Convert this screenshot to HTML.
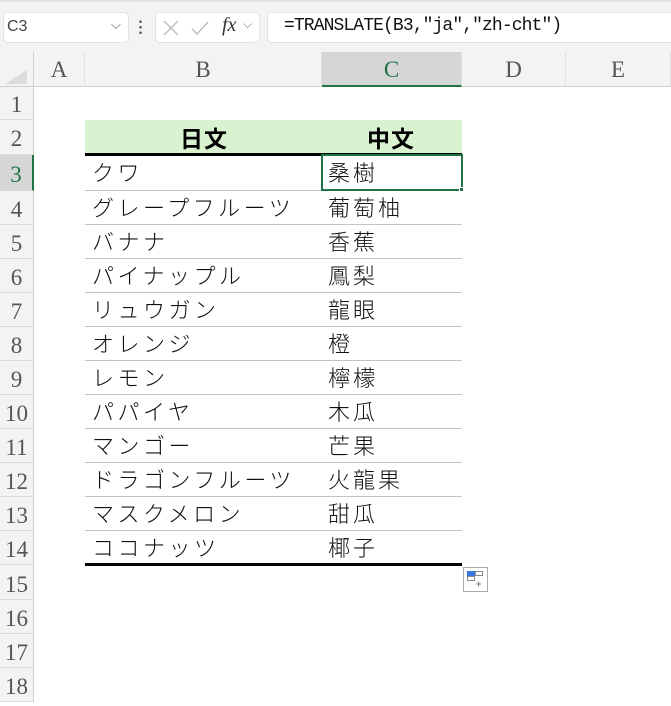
<!DOCTYPE html>
<html><head><meta charset="utf-8"><style>
*{margin:0;padding:0;box-sizing:border-box}
body{width:671px;height:695px;overflow:hidden;background:#fff;position:relative;font-family:"Liberation Sans","Noto Sans CJK JP",sans-serif}
.a{position:absolute}
.top{left:0;top:0;width:671px;height:52px;background:#f3f3f3;border-top:2px solid #e0e0e0}
.box{background:#fff;border:1px solid #e4e4e4;border-radius:5px}
.ch{top:52px;height:35px;background:#f3f3f3;border-bottom:1px solid #d0d0d0;border-right:1px solid #e0e0e0;font-family:"Liberation Serif",serif;font-size:23px;color:#555;text-align:center;line-height:36px}
.rh{left:0;width:34px;background:#f3f3f3;border-bottom:1px solid #dcdcdc;border-right:1px solid #d0d0d0;font-family:"Liberation Serif",serif;font-size:23px;color:#555;text-align:center}
.jp{font-family:"Liberation Sans","Noto Sans CJK JP",sans-serif;font-weight:300;font-size:22px;color:#111;letter-spacing:3.5px;white-space:nowrap}
.zh{letter-spacing:3px}
.row{left:85px;width:377px;height:34px;border-bottom:1px solid #c4c4c4}
</style></head><body>
<div class="a top"></div>
<div class="a box" style="left:3px;top:12px;width:126px;height:31px"></div>
<div class="a" style="left:7px;top:18px;font-size:16px;color:#444;font-weight:300">C3</div>
<div class="a" style="left:111px;top:17px;font-size:13px;color:#555">⌵</div>
<div class="a" style="left:139px;top:19px;width:3px;height:16px;background:radial-gradient(circle,#555 1.2px,transparent 1.4px) 0 0/3px 5.5px"></div>
<div class="a box" style="left:155px;top:12px;width:105px;height:31px"></div>
<svg class="a" style="left:162px;top:19px" width="60" height="18"><path d="M2 2L16 16M16 2L2 16" stroke="#bbb" stroke-width="1.3"/><path d="M30 10L35 15L46 3" stroke="#bbb" stroke-width="1.3" fill="none"/></svg>
<div class="a" style="left:222px;top:14px;font-family:'Liberation Serif',serif;font-style:italic;font-size:20px;color:#333">fx</div>
<div class="a" style="left:243px;top:17px;font-size:12px;color:#777">⌵</div>
<div class="a box" style="left:267px;top:12px;width:410px;height:31px"></div>
<div class="a" style="left:284px;top:16px;font-family:'Liberation Mono',monospace;font-size:18px;letter-spacing:-0.9px;color:#111">=TRANSLATE(B3,"ja","zh-cht")</div>

<div class="a" style="left:0;top:52px;width:34px;height:35px;background:#f3f3f3;border-right:1px solid #d0d0d0;border-bottom:1px solid #d0d0d0"></div>
<div class="a" style="left:5px;top:70px;width:0;height:0;border-left:22px solid transparent;border-bottom:14px solid #dcdcdc"></div>
<div class="a ch" style="left:34px;width:51px">A</div>
<div class="a ch" style="left:85px;width:237px">B</div>
<div class="a ch" style="left:322px;width:140px;background:#d6d6d6;color:#217346;border-bottom:2px solid #217346">C</div>
<div class="a ch" style="left:462px;width:104px">D</div>
<div class="a ch" style="left:566px;width:105px">E</div>

<div class="a rh" style="top:87px;height:33px;line-height:36px">1</div>
<div class="a rh" style="top:120px;height:35px;line-height:38px">2</div>
<div class="a rh" style="top:155px;height:36px;line-height:40px;background:#d6d6d6;color:#217346;border-right:2px solid #217346">3</div>
<div class="a rh" style="top:191px;height:34px;line-height:38px">4</div>
<div class="a rh" style="top:225px;height:34px;line-height:38px">5</div>
<div class="a rh" style="top:259px;height:34px;line-height:38px">6</div>
<div class="a rh" style="top:293px;height:34px;line-height:38px">7</div>
<div class="a rh" style="top:327px;height:34px;line-height:38px">8</div>
<div class="a rh" style="top:361px;height:34px;line-height:38px">9</div>
<div class="a rh" style="top:395px;height:34px;line-height:38px">10</div>
<div class="a rh" style="top:429px;height:34px;line-height:38px">11</div>
<div class="a rh" style="top:463px;height:34px;line-height:38px">12</div>
<div class="a rh" style="top:497px;height:34px;line-height:38px">13</div>
<div class="a rh" style="top:531px;height:34px;line-height:38px">14</div>
<div class="a rh" style="top:565px;height:35px;line-height:40px">15</div>
<div class="a rh" style="top:600px;height:34px;line-height:38px">16</div>
<div class="a rh" style="top:634px;height:34px;line-height:38px">17</div>
<div class="a rh" style="top:668px;height:34px;line-height:38px">18</div>

<div class="a" style="left:85px;top:120px;width:377px;height:35px;background:#d9f2d0"></div>
<div class="a" style="left:180px;top:120px;font-family:'Liberation Sans','Noto Sans CJK JP',sans-serif;font-weight:bold;font-size:23px;letter-spacing:1px">日文</div>
<div class="a" style="left:367px;top:120px;font-family:'Liberation Sans','Noto Sans CJK JP',sans-serif;font-weight:bold;font-size:23px;letter-spacing:1px">中文</div>
<div class="a" style="left:85px;top:153px;width:377px;height:3px;background:#000"></div>

<div class="a row" style="top:157px"></div><div class="a jp" style="left:92px;top:156px">クワ</div><div class="a jp zh" style="left:328px;top:156px">桑樹</div>
<div class="a row" style="top:191px"></div><div class="a jp" style="left:92px;top:191px">グレープフルーツ</div><div class="a jp zh" style="left:328px;top:191px">葡萄柚</div>
<div class="a row" style="top:225px"></div><div class="a jp" style="left:92px;top:225px">バナナ</div><div class="a jp zh" style="left:328px;top:225px">香蕉</div>
<div class="a row" style="top:259px"></div><div class="a jp" style="left:92px;top:259px">パイナップル</div><div class="a jp zh" style="left:328px;top:259px">鳳梨</div>
<div class="a row" style="top:293px"></div><div class="a jp" style="left:92px;top:293px">リュウガン</div><div class="a jp zh" style="left:328px;top:293px">龍眼</div>
<div class="a row" style="top:327px"></div><div class="a jp" style="left:92px;top:327px">オレンジ</div><div class="a jp zh" style="left:328px;top:327px">橙</div>
<div class="a row" style="top:361px"></div><div class="a jp" style="left:92px;top:361px">レモン</div><div class="a jp zh" style="left:328px;top:361px">檸檬</div>
<div class="a row" style="top:395px"></div><div class="a jp" style="left:92px;top:395px">パパイヤ</div><div class="a jp zh" style="left:328px;top:395px">木瓜</div>
<div class="a row" style="top:429px"></div><div class="a jp" style="left:92px;top:429px">マンゴー</div><div class="a jp zh" style="left:328px;top:429px">芒果</div>
<div class="a row" style="top:463px"></div><div class="a jp" style="left:92px;top:463px">ドラゴンフルーツ</div><div class="a jp zh" style="left:328px;top:463px">火龍果</div>
<div class="a row" style="top:497px"></div><div class="a jp" style="left:92px;top:497px">マスクメロン</div><div class="a jp zh" style="left:328px;top:497px">甜瓜</div>
<div class="a jp" style="left:92px;top:531px">ココナッツ</div><div class="a jp zh" style="left:328px;top:531px">椰子</div>
<div class="a" style="left:85px;top:563px;width:377px;height:3px;background:#000"></div>

<div class="a" style="left:321px;top:154px;width:142px;height:37px;border:2px solid #217346"></div>
<div class="a" style="left:459px;top:187px;width:5px;height:5px;background:#217346;border:1px solid #fff"></div>

<div class="a" style="left:463px;top:567px;width:25px;height:25px;border:1px solid #aaa;background:#fff"></div>
<div class="a" style="left:467px;top:571px;width:8px;height:5px;background:#3a74e0"></div>
<div class="a" style="left:475px;top:571px;width:8px;height:5px;border:1px solid #888"></div>
<div class="a" style="left:467px;top:576px;width:8px;height:5px;border:1px solid #888"></div>
<div class="a" style="left:476px;top:579px;font-size:9px;color:#777;font-weight:bold">+</div>
</body></html>
